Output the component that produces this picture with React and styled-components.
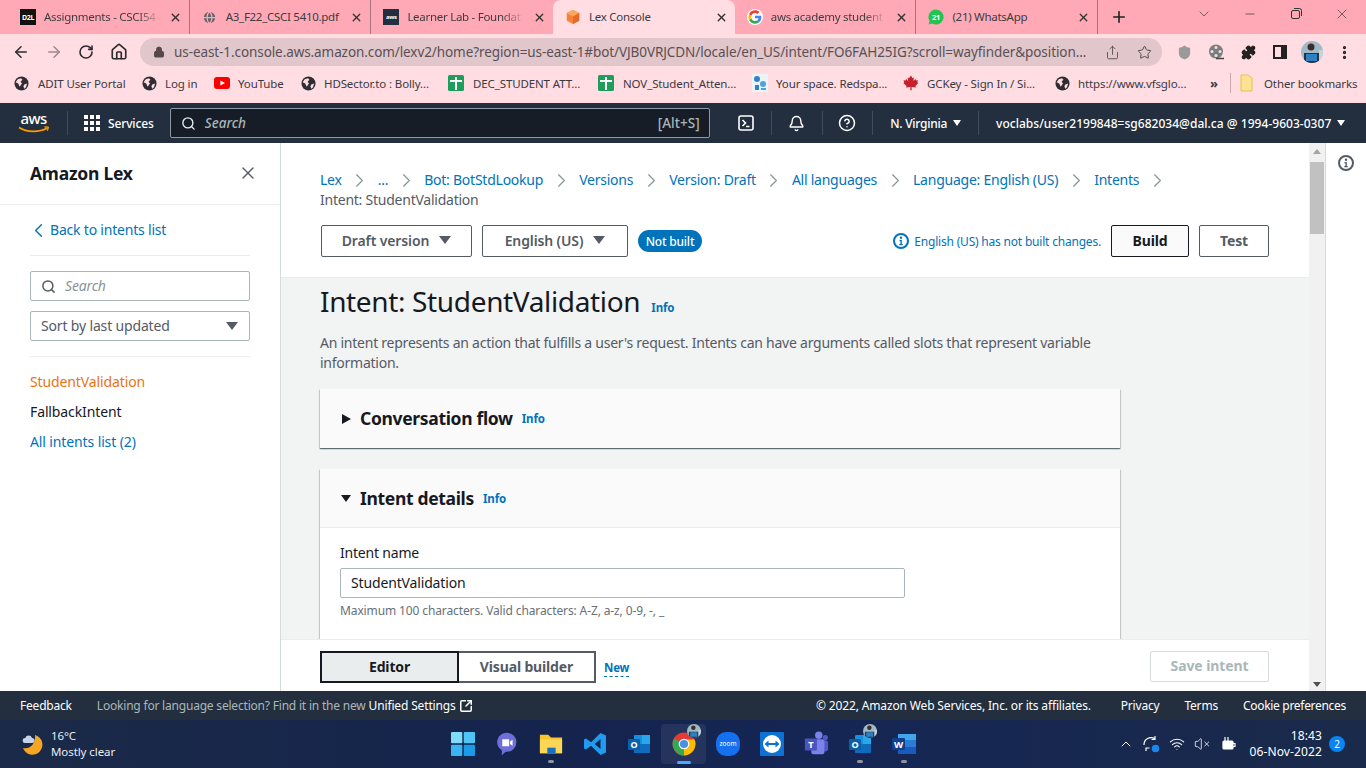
import React from 'react'
import styled, { createGlobalStyle } from 'styled-components'
import {
  ArrowLeft, ArrowRight, RotateCw, Home, Lock, Share, Star, Puzzle, MoreVertical, X, Plus,
  ChevronDown, Minus, Globe, ChevronRight, ChevronLeft, Search, Bell, HelpCircle,
  ChevronUp, Wifi, VolumeX, SquareArrowOutUpRight, Shield,
} from 'lucide-react'

const GlobalStyle = createGlobalStyle`
  html, body { margin: 0; padding: 0; background: #fff; }
  * { box-sizing: border-box; }
  body { font-family: "Noto Sans", "Open Sans", sans-serif; overflow: hidden; }
`

const Shell = styled.div`
  width: 1366px;
  height: 768px;
  display: flex;
  flex-direction: column;
  overflow: hidden;
`

/* browser chrome */
const TabStrip = styled.div`
  height: 34px;
  background: #ffa9b6;
  padding-left: 8px;
  display: flex;
  align-items: stretch;
  flex: none;
`

const Tab = styled.div`
  width: 181.7px;
  flex: none;
  padding: 0 7px 0 12px;
  display: flex;
  align-items: center;
  gap: 8px;
  font-size: 11.5px;
  letter-spacing: -0.28px;
  color: #3c3c40;
  background: ${p => (p.$active ? '#ffdde3' : 'transparent')};
  border-radius: ${p => (p.$active ? '8px 8px 0 0' : '0')};
  border-right: ${p => (p.$sep ? '1px solid #a8727c' : 'none')};
  background-clip: ${p => (p.$sep ? 'padding-box' : 'border-box')};
`

const TabTitle = styled.span`
  flex: 1;
  min-width: 0;
  white-space: nowrap;
  margin-top: -1px;
  ${p => (p.$fade ? 'mask-image: linear-gradient(to right, #000 80%, transparent 100%);' : '')}
`

const TabFavicon = styled.span`
  width: 16px;
  height: 16px;
  flex: none;
  display: flex;
  align-items: center;
  justify-content: center;
`

const D2lMark = styled.span`
  width: 16px;
  height: 16px;
  background: #111;
  color: #fff;
  font-size: 7px;
  font-weight: 700;
  letter-spacing: -0.3px;
  display: flex;
  align-items: center;
  justify-content: center;
`

const AwsTile = styled.span`
  width: 16px;
  height: 16px;
  background: #232f3e;
  color: #fff;
  font-size: 6px;
  font-weight: 700;
  display: flex;
  align-items: center;
  justify-content: center;
`

const NewTab = styled.span`
  width: 42px;
  display: flex;
  align-items: center;
  justify-content: center;
`

const WindowControls = styled.div`
  margin-left: auto;
  display: flex;
  align-items: center;
  padding-right: 1px;
  margin-top: -7px;
`

const WindowButton = styled.span`
  width: 46px;
  display: flex;
  align-items: center;
  justify-content: center;
  color: #333;
`

const Toolbar = styled.div`
  height: 32px;
  background: #ffdde3;
  display: flex;
  align-items: center;
  padding-left: 5px;
  flex: none;
  color: #333;
`

const NavButton = styled.span`
  width: 32.5px;
  margin-top: 4px;
  display: flex;
  align-items: center;
  justify-content: center;
  color: ${p => (p.$dim ? '#9a8a8e' : '#2b2b2e')};
`

const Omnibox = styled.div`
  width: 1022px;
  height: 28px;
  margin-left: 5px;
  margin-top: 4px;
  border-radius: 14px;
  background: #e1c6cb;
  display: flex;
  align-items: center;
  padding: 0 10px 0 13px;
  gap: 9px;
  color: #55494c;
`

const Url = styled.span`
  flex: 1;
  font-size: 13.5px;
  letter-spacing: -0.085px;
  color: #5a5053;
  white-space: nowrap;
  overflow: hidden;
`

const ToolIcons = styled.div`
  display: flex;
  align-items: center;
  margin-left: 6px;
  margin-top: 4px;
`

const ToolIcon = styled.span`
  width: 32px;
  display: flex;
  align-items: center;
  justify-content: center;
`

const SidePanelIcon = styled.span`
  width: 14px;
  height: 14px;
  border: 2px solid #222;
  border-right-width: 6px;
`

const BookmarkBar = styled.div`
  height: 37px;
  padding: 0 0 3px 14px;
  background: #ffdde3;
  display: flex;
  align-items: center;
  font-size: 11.5px;
  letter-spacing: -0.12px;
  color: #3a3a3e;
  flex: none;
`

const Bookmark = styled.span`
  display: flex;
  align-items: center;
  gap: ${p => p.$gap || 8}px;
  flex: none;
  white-space: nowrap;
  width: ${p => p.$w}px;
`

const BookmarkSep = styled.span`
  width: 1px;
  height: 20px;
  background: #c9a9af;
  margin: 0 9px 0 0;
  flex: none;
`

const More = styled.span`
  width: 33px;
  font-size: 13px;
  font-weight: 700;
  flex: none;
  padding-left: 13px;
`

/* aws nav */
const ConsoleNav = styled.div`
  height: 40px;
  background: #232f3e;
  color: #fff;
  display: flex;
  align-items: center;
  font-size: 12px;
  font-weight: 500;
  flex: none;
  padding-left: 18px;
`

const NavDivider = styled.span`
  width: 1px;
  height: 24px;
  background: #414d5c;
  flex: none;
  margin: ${p => p.$m || '0'};
`

const ServicesButton = styled.span`
  display: flex;
  align-items: center;
  gap: 8px;
  letter-spacing: -0.13px;
`

const SearchBox = styled.div`
  width: 540px;
  height: 30px;
  margin-left: 16px;
  background: #161d26;
  border: 1px solid #8d99a5;
  border-radius: 2px;
  display: flex;
  align-items: center;
  padding: 0 9px 0 10px;
  color: #aab7b8;
  font-size: 13.5px;
  letter-spacing: 0.05px;
`

const SearchHint = styled.span`
  font-style: italic;
  margin-left: 9px;
  flex: 1;
`

const NavIcon = styled.span`
  width: 49.5px;
  flex: none;
  display: flex;
  align-items: center;
  justify-content: center;
`

const ShellSlot = styled(NavIcon)`
  margin-left: 12px;
`

const NavMenu = styled.span`
  display: flex;
  align-items: center;
  white-space: nowrap;
  letter-spacing: ${p => p.$ls}px;
  gap: 6px;
  padding: 0 ${p => p.$pr || 0}px 0 17px;
`

const Tri = styled.span`
  width: 0;
  height: 0;
  border-left: ${p => p.$s || 4.5}px solid transparent;
  border-right: ${p => p.$s || 4.5}px solid transparent;
  border-top: ${p => (p.$s || 4.5) * 1.35}px solid ${p => p.$c || 'currentColor'};
  display: inline-block;
  flex: none;
`

/* console body */
const Body = styled.div`
  flex: 1;
  min-height: 0;
  display: flex;
`

const Sidebar = styled.aside`
  width: 281px;
  flex: none;
  border-right: 1px solid #d5dbdb;
  background: #fff;
  font-size: 14px;
`

const SideHeader = styled.div`
  height: 62px;
  padding: 0 22px 2px 30px;
  border-bottom: 1px solid #eaeded;
  display: flex;
  align-items: center;
  justify-content: space-between;
  font-size: 17.5px;
  font-weight: 700;
  letter-spacing: -0.25px;
  color: #16191f;
`

const SideSection = styled.div`
  margin: 0 30px;
  padding: ${p => p.$pad};
  border-bottom: ${p => (p.$line ? '1px solid #eaeded' : 'none')};
  display: flex;
  flex-direction: column;
  gap: ${p => p.$gap || 0}px;
`

const BackLink = styled.a`
  color: #0073bb;
  display: flex;
  align-items: center;
  gap: 0;
  margin-left: -3px;
  letter-spacing: -0.2px;
  height: 20px;
  line-height: 18px;
`

const SideField = styled.div`
  height: 30px;
  border: 1px solid #aab7b8;
  border-radius: 2px;
  display: flex;
  align-items: center;
  padding: 0 11px 0 10px;
  color: #545b64;
  letter-spacing: -0.16px;
`

const SideSearchText = styled.span`
  font-style: italic;
  color: #879596;
  margin: -2px 0 0 9px;
`

const SideSelectText = styled.span`
  color: #545b64;
  flex: 1;
  margin-top: -2px;
`

const SideLink = styled.a`
  display: block;
  height: 30px;
  line-height: 20px;
  letter-spacing: -0.12px;
  color: ${p => p.$color};
`

const Main = styled.main`
  flex: 1;
  min-width: 0;
  display: flex;
  flex-direction: column;
  font-size: 14px;
`

const StickyHead = styled.div`
  height: 135px;
  flex: none;
  border-bottom: 1px solid #eaeded;
  padding: 27px 40px 0 39px;
  background: #fff;
`

const Crumbs = styled.nav`
  display: flex;
  flex-wrap: wrap;
  align-items: center;
  line-height: 20px;
  letter-spacing: -0.24px;
`

const Crumb = styled.a`
  color: ${p => (p.$plain ? '#545b64' : '#0073bb')};
`

const CrumbSep = styled.span`
  width: 36px;
  height: 20px;
  display: flex;
  align-items: center;
  justify-content: center;
  color: #879596;
  flex: none;
`

const HeadRow = styled.div`
  display: flex;
  align-items: center;
  margin-top: 15px;
  padding-left: 1px;
`

const Dropdown = styled.button`
  height: 32px;
  width: ${p => p.$w}px;
  margin-right: 10px;
  border: 1px solid #545b64;
  border-radius: 2px;
  background: #fff;
  color: #545b64;
  font: 600 14px "Noto Sans", sans-serif;
  letter-spacing: -0.12px;
  padding: 0 0 2px;
  display: flex;
  align-items: center;
  justify-content: center;
  gap: 10px;
`

const Badge = styled.span`
  height: 22px;
  width: 64px;
  border-radius: 11px;
  background: #0073bb;
  color: #fff;
  font-size: 12px;
  letter-spacing: -0.2px;
  font-weight: 500;
  display: flex;
  align-items: center;
  justify-content: center;
`

const BuildNote = styled.span`
  margin-left: auto;
  display: flex;
  align-items: center;
  gap: 5px;
  color: #0073bb;
  font-size: 12px;
  letter-spacing: -0.2px;
  margin-right: 10px;
`

const ActionButton = styled.button`
  height: 32px;
  width: ${p => p.$w}px;
  margin-right: ${p => p.$mr || 0}px;
  border: 1px solid ${p => (p.$primary ? '#16191f' : '#545b64')};
  border-radius: 2px;
  background: ${p => (p.$primary ? '#fafafa' : '#fff')};
  color: ${p => (p.$primary ? '#16191f' : '#545b64')};
  font: 700 14px "Noto Sans", sans-serif;
  letter-spacing: -0.1px;
  padding: 0 0 2px;
`

const Content = styled.div`
  flex: 1;
  min-height: 0;
  overflow: hidden;
  background: #f2f3f3;
  padding: 6px 0 0 39px;
`

const TitleRow = styled.div`
  display: flex;
  align-items: baseline;
  gap: 11px;
  height: 34px;
`

const Title = styled.h1`
  margin: 0;
  font-size: 28px;
  font-weight: 400;
  line-height: 34px;
  letter-spacing: -0.35px;
  color: #16191f;
`

const InfoLink = styled.a`
  font-size: 11.5px;
  font-weight: 700;
  color: #0073bb;
  letter-spacing: -0.1px;
`

const Description = styled.p`
  margin: 15px 0 16px;
  width: 800px;
  line-height: 20px;
  color: #545b64;
  letter-spacing: -0.245px;
`

const Card = styled.section`
  width: 800px;
  margin-bottom: 21px;
  background: #fff;
  box-shadow: 0 1px 1px 0 rgba(0, 28, 36, 0.5), 1px 1px 1px 0 rgba(0, 28, 36, 0.12), -1px 1px 1px 0 rgba(0, 28, 36, 0.12);
`

const CardHeader = styled.div`
  height: ${p => p.$h}px;
  padding: 0 21px;
  background: #fafafa;
  border-bottom: ${p => (p.$open ? '1px solid #eaeded' : 'none')};
  display: flex;
  align-items: center;
  gap: 9px;
`

const Caret = styled.span`
  width: 10px;
  height: 12px;
  flex: none;
  display: flex;
  align-items: center;
  justify-content: center;
  color: #16191f;
`

const CardTitle = styled.h2`
  margin: 0 0 1px;
  font-size: 17.5px;
  font-weight: 700;
  letter-spacing: -0.33px;
  color: #16191f;
`

const CardBody = styled.div`
  padding: 15px 20px 30px;
`

const FieldLabel = styled.label`
  display: block;
  line-height: 20px;
  color: #16191f;
  letter-spacing: -0.2px;
  margin-bottom: 5px;
`

const TextInput = styled.div`
  width: 565px;
  height: 30px;
  border: 1px solid #aab7b8;
  border-radius: 2px;
  background: #fff;
  padding: 0 10px;
  line-height: 28px;
  letter-spacing: -0.15px;
  color: #16191f;
`

const Hint = styled.div`
  margin-top: 5px;
  font-size: 12px;
  line-height: 16px;
  color: #687078;
  letter-spacing: -0.12px;
`

const BottomBar = styled.div`
  height: 52px;
  flex: none;
  background: #fff;
  border-top: 1px solid #eaeded;
  display: flex;
  align-items: flex-start;
  padding: 11px 40px 0 39px;
`

const Segment = styled.button`
  height: 32px;
  width: ${p => p.$w}px;
  border: ${p => (p.$on ? '2px solid #16191f' : '2px solid #545b64')};
  border-left-width: ${p => (p.$on ? '2px' : '0')};
  background: ${p => (p.$on ? '#eaeded' : '#fff')};
  color: ${p => (p.$on ? '#16191f' : '#545b64')};
  font: 700 14px "Noto Sans", sans-serif;
  letter-spacing: -0.15px;
  padding: 0 0 2px;
`

const NewTag = styled.span`
  margin: 9px 0 0 8px;
  color: #0073bb;
  font-size: 11.5px;
  font-weight: 700;
  letter-spacing: -0.2px;
  border-bottom: 1px dashed #0073bb;
  line-height: 16px;
`

const SaveButton = styled.button`
  margin-left: auto;
  width: 119px;
  height: 31px;
  border: 1px solid #d5dbdb;
  border-radius: 2px;
  background: #fff;
  color: #aab7b8;
  font: 700 14px "Noto Sans", sans-serif;
  letter-spacing: -0.1px;
  padding: 0 0 2px;
`

const Scrollbar = styled.div`
  width: 16px;
  flex: none;
  background: #f1f1f1;
  display: flex;
  flex-direction: column;
  align-items: stretch;
  padding: 6px 0 4px;
`

const ScrollArrow = styled.span`
  align-self: center;
  width: 0;
  height: 0;
  border-left: 4px solid transparent;
  border-right: 4px solid transparent;
  ${p => (p.$up ? 'border-bottom: 5px solid #a3a3a3;' : 'border-top: 5px solid #505050;')}
`

const ScrollThumb = styled.span`
  height: 72px;
  margin: 8px 1px auto;
  background: #c1c1c1;
`

const Rail = styled.div`
  width: 41px;
  flex: none;
  border-left: 1px solid #d5dbdb;
  background: #fff;
  display: flex;
  justify-content: center;
  padding-top: 12px;
  color: #545b64;
`

/* footers */
const Footer = styled.footer`
  height: 29px;
  flex: none;
  background: #232f3e;
  color: #fff;
  display: flex;
  align-items: center;
  font-size: 12px;
  letter-spacing: -0.2px;
  padding: 0 20px;
  white-space: nowrap;
`

const FootNote = styled.span`
  color: #aab7b8;
  margin-left: 25px;
`

const FootLink = styled.span`
  margin-left: ${p => p.$ml}px;
  letter-spacing: ${p => p.$ls || -0.2}px;
  display: flex;
  align-items: center;
  gap: 3px;
`

const Copyright = styled(FootLink)`
  margin-left: auto;
`

const Taskbar = styled.div`
  height: 48px;
  flex: none;
  background: linear-gradient(90deg, #1b2a47 0%, #14244d 40%, #152655 60%, #1a2a4a 100%);
  color: #fff;
  display: flex;
  align-items: center;
  padding-left: 21px;
`

const Weather = styled.div`
  display: flex;
  align-items: center;
  gap: 8px;
  width: 420px;
  flex: none;
  font-size: 11.5px;
  line-height: 16px;
`

const WeatherText = styled.div`
  letter-spacing: -0.08px;
  color: #e9edf4;
`

const TaskIcons = styled.div`
  display: flex;
  align-items: center;
`

const TaskItem = styled.span`
  width: 44.1px;
  height: 40px;
  flex: none;
  display: flex;
  align-items: center;
  justify-content: center;
  position: relative;
  border-radius: 4px;
  background: ${p => (p.$active ? 'rgba(255,255,255,0.07)' : 'transparent')};
  &::after {
    content: '';
    display: ${p => (p.$dot || p.$active ? 'block' : 'none')};
    position: absolute;
    bottom: ${p => (p.$active ? 0 : 1)}px;
    left: 50%;
    width: ${p => (p.$active ? 14 : 6)}px;
    height: 3px;
    margin-left: ${p => (p.$active ? -7 : -3)}px;
    border-radius: 2px;
    background: ${p => (p.$active ? '#4ca8ff' : '#8d95a5')};
  }
`

const MiniAvatar = styled.span`
  position: absolute;
  top: 0;
  right: 5px;
  display: flex;
`

const Tray = styled.div`
  margin-left: auto;
  display: flex;
  align-items: center;
  padding-right: 21px;
  color: #fff;
`

const TrayIcon = styled.span`
  width: 25.5px;
  flex: none;
  display: flex;
  align-items: center;
  justify-content: center;
`

const Clock = styled.div`
  text-align: right;
  font-size: 12px;
  line-height: 16px;
  letter-spacing: 0.12px;
  margin-left: 9px;
`

const NotifyBadge = styled.span`
  width: 16px;
  height: 16px;
  margin-left: 7px;
  border-radius: 50%;
  background: #0a84f0;
  color: #fff;
  font-size: 10px;
  display: flex;
  align-items: center;
  justify-content: center;
`

/* drawings */
const LexCube = () => (
  <svg width="18" height="18" viewBox="0 0 18 18">
    <path d="M9 1l7 3.6v8.6L9 17l-7-3.8V4.6z" fill="#f58536" />
    <path d="M9 1l7 3.6L9 8.4 2 4.6z" fill="#f9a95c" />
    <path d="M9 8.4V17l7-3.8V4.6z" fill="#e8682a" />
  </svg>
)

const GoogleG = () => (
  <svg width="16" height="16" viewBox="0 0 48 48">
    <circle cx="24" cy="24" r="24" fill="#fff" />
    <path fill="#4285F4" d="M43 24.5c0-1.400-.1-2.700-.4-4H24v7.600h10.700c-.5 2.500-1.900 4.600-4 6l6.400 5c3.700-3.500 5.900-8.600 5.900-14.600z" />
    <path fill="#34A853" d="M24 44c5.400 0 9.900-1.800 13.100-4.900l-6.400-5c-1.800 1.200-4 1.900-6.700 1.900-5.200 0-9.600-3.500-11.100-8.200l-6.600 5.100C9.600 39.400 16.300 44 24 44z" />
    <path fill="#FBBC05" d="M12.900 27.800c-.8-2.400-.8-5.100 0-7.500l-6.600-5.100c-2.800 5.600-2.800 12.100 0 17.700z" />
    <path fill="#EA4335" d="M24 12c2.900 0 5.500 1 7.600 3l5.700-5.700C33.900 6 29.400 4 24 4 16.300 4 9.600 8.600 6.300 15.200l6.600 5.100C14.400 15.500 18.800 12 24 12z" />
  </svg>
)

const WhatsAppMark = () => (
  <svg width="16" height="16" viewBox="0 0 16 16">
    <path d="M8 0.500a7.500 7.500 0 0 0-6.400 11.400L.6 15.500l3.700-1A7.500 7.500 0 1 0 8 .5z" fill="#25c34f" />
    <circle cx="8" cy="8" r="5.500" fill="#25c34f" />
    <text x="8" y="10.800" fontSize="7.500" fontWeight="700" textAnchor="middle" fill="#fff" fontFamily="Noto Sans">21</text>
  </svg>
)

const SheetMark = () => (
  <svg width="16" height="16" viewBox="0 0 16 16">
    <rect width="16" height="16" rx="1.500" fill="#1e9e5a" />
    <path d="M7 2h2v3h5v2H9v8H7V7H2V5h5z" fill="#fff" />
  </svg>
)

const YoutubeMark = () => (
  <svg width="16" height="16" viewBox="0 0 16 16">
    <rect y="2" width="16" height="12" rx="3" fill="#f00" />
    <path d="M6.400 5.400L11 8l-4.600 2.600z" fill="#fff" />
  </svg>
)

const GlobeDark = () => (
  <svg width="15" height="15" viewBox="0 0 16 16">
    <circle cx="8" cy="8" r="7.500" fill="#2e2e32" />
    <path d="M4 3.500l3.500-1L9 4 7 6 8.500 8 6 11.500 4.500 8 1.700 6.700zM11 9l3-1-1.200 4L11 13.500 10 11z" fill="#ffdde3" />
  </svg>
)

const SpaceMark = () => (
  <svg width="16" height="18" viewBox="0 0 16 18">
    <rect width="16" height="18" fill="#eef3f8" />
    <circle cx="5" cy="5" r="3" fill="#2f82c7" />
    <circle cx="11" cy="10" r="3" fill="#4aa3df" />
    <rect x="3" y="11" width="4" height="5" fill="#2f82c7" />
    <rect x="9" y="14" width="5" height="2" fill="#4aa3df" />
  </svg>
)

const MapleLeaf = () => (
  <svg width="16" height="16" viewBox="0 0 16 16">
    <path d="M8 .500l1.500 2.800 1.400-.7-.5 3.500 2-2 .6 1.400 2-.3-.7 2.300.9.500L12.500 11l.4 1.400-4.300-.5.100 3.300h-1.400l.1-3.300-4.300.5.400-1.400L.3 8l.9-.5-.7-2.300 2 .3.600-1.400 2 2-.5-3.500 1.400.7z" fill="#c4202b" />
  </svg>
)

const FolderMark = () => (
  <svg width="13" height="18" viewBox="0 0 13 18">
    <path d="M1 1h7l4 3v13H1z" fill="#fde293" stroke="#e8c04f" />
  </svg>
)

const FilmReel = () => (
  <svg width="17" height="18" viewBox="0 0 17 18">
    <circle cx="8" cy="8.500" r="7" fill="#7d7d7d" />
    <circle cx="8" cy="4.500" r="1.500" fill="#e6e6e6" />
    <circle cx="8" cy="12.500" r="1.500" fill="#e6e6e6" />
    <circle cx="4" cy="8.500" r="1.500" fill="#e6e6e6" />
    <circle cx="12" cy="8.500" r="1.500" fill="#e6e6e6" />
    <path d="M8 15.500h8" stroke="#444" strokeWidth="1.500" />
  </svg>
)

const Portrait = ({ size }) => (
  <svg width={size} height={size} viewBox="0 0 22 22">
    <defs>
      <clipPath id={`portrait-${size}`}><circle cx="11" cy="11" r="11" /></clipPath>
    </defs>
    <g clipPath={`url(#portrait-${size})`}>
      <rect width="22" height="22" fill="#9fb9c6" />
      <circle cx="10" cy="6" r="3.500" fill="#3a2e2a" />
      <path d="M3 12h15v10H3z" fill="#2c3138" />
      <path d="M5 13h11v7H5z" fill="#2f7fc4" />
      <path d="M18 9h4v13h-4z" fill="#c4d4dc" />
    </g>
  </svg>
)

const AwsLogo = () => (
  <svg width="31" height="30" viewBox="0 0 31 30">
    <text x="15.500" y="16" textAnchor="middle" fontSize="15" fill="#fff" fontFamily="Noto Sans" letterSpacing="-0.600">aws</text>
    <path d="M1 19.500c8 5 20 5 28 .8" fill="none" stroke="#f90" strokeWidth="1.600" />
    <path d="M26.500 18.800l3.800.6-1 3.200" fill="none" stroke="#f90" strokeWidth="1.400" />
  </svg>
)

const GridDots = () => (
  <svg width="16" height="16" viewBox="0 0 16 16" fill="#fff">
    {[0, 6, 12].flatMap(y => [0, 6, 12].map(x => <rect key={`${x}-${y}`} x={x} y={y} width="4" height="4" />))}
  </svg>
)

const ShellIcon = () => (
  <svg width="16" height="16" viewBox="0 0 16 16" fill="none" stroke="#fff" strokeWidth="1.600">
    <rect x="1" y="1" width="14" height="14" rx="2" />
    <path d="M4.500 5l3 3-3 3M8 11.500h3.500" />
  </svg>
)

const InfoGlyph = ({ color }) => (
  <svg width="16" height="16" viewBox="0 0 16 16">
    <circle cx="8" cy="8" r="7" fill="none" stroke={color} strokeWidth="2" />
    <circle cx="8" cy="4.800" r="1.200" fill={color} />
    <path d="M6.500 7h2.300v4h1v1.200H6.300V11h1.100V8.200H6.500z" fill={color} />
  </svg>
)

const WeatherMark = () => (
  <svg width="22" height="24" viewBox="0 0 22 24">
    <path d="M14 3a10 10 0 1 1-12 13c7 2 13-5 12-13z" fill="#f5a623" />
    <path d="M4 11a2.500 2.500 0 0 1 .3-5 3.500 3.500 0 0 1 6.700 0 2.500 2.500 0 0 1 0 5z" fill="#c6d3ea" />
  </svg>
)

const WinStart = () => (
  <svg width="24" height="24" viewBox="0 0 24 24">
    <rect width="11.300" height="11.300" rx="1" fill="#7fdcfb" />
    <rect x="12.700" width="11.300" height="11.300" rx="1" fill="#4fc4f5" />
    <rect y="12.700" width="11.300" height="11.300" rx="1" fill="#3ab4f2" />
    <rect x="12.700" y="12.700" width="11.300" height="11.300" rx="1" fill="#1a9be8" />
  </svg>
)

const ChatMark = () => (
  <svg width="22" height="24" viewBox="0 0 24 28">
    <path d="M12 1a11 11 0 0 1 0 22c-.6 0-1 0-1.600-.1L6 27v-5.500A11 11 0 0 1 12 1z" fill="#6e6fd8" />
    <path d="M6.500 8.500h8v8h-8zM15.500 11l3-2v7l-3-2z" fill="#fff" />
  </svg>
)

const Explorer = () => (
  <svg width="24" height="24" viewBox="0 0 26 26">
    <path d="M1 3h9l3 3h12v17H1z" fill="#f7c52b" />
    <path d="M1 8h24v15H1z" fill="#fcd655" />
    <rect x="9" y="17" width="9" height="6" fill="#1a6fc4" />
  </svg>
)

const VsCode = () => (
  <svg width="24" height="24" viewBox="0 0 24 24">
    <path d="M17.500 1L23 3.500v17L17.500 23 8 13.800 3 17.500 1 16.500v-9l2-1 5 3.700zM17.500 7l-5.800 5 5.800 5z" fill="#1f9cf0" />
  </svg>
)

const OutlookMark = () => (
  <svg width="24" height="24" viewBox="0 0 24 24">
    <rect x="7" y="3" width="16" height="18" rx="1" fill="#1490df" />
    <rect x="15" y="3" width="8" height="9" fill="#28a8ea" />
    <path d="M7 12h16v9H7z" fill="#0f6cbd" />
    <rect x="1" y="7" width="12" height="11" rx="1" fill="#0a5fa8" />
    <text x="7" y="15.500" textAnchor="middle" fontSize="9" fontWeight="700" fill="#fff" fontFamily="Noto Sans">O</text>
  </svg>
)

const ChromeMark = () => (
  <svg width="24" height="24" viewBox="0 0 24 24">
    <circle cx="12" cy="12" r="11.500" fill="#e53935" />
    <path d="M12 12L2 6.500A11.500 11.500 0 0 0 12 23.500z" fill="#34a853" />
    <path d="M12 12v11.500A11.500 11.500 0 0 0 22.500 7.500H12z" fill="#fbbc05" />
    <circle cx="12" cy="12" r="5.300" fill="#fff" />
    <circle cx="12" cy="12" r="4.100" fill="#4a90e2" />
  </svg>
)

const ZoomMark = () => (
  <svg width="24" height="24" viewBox="0 0 24 24">
    <rect width="24" height="24" rx="10" fill="#1470ef" />
    <text x="12" y="14" textAnchor="middle" fontSize="6.500" fill="#fff" fontFamily="Noto Sans">zoom</text>
  </svg>
)

const TeamViewer = () => (
  <svg width="24" height="24" viewBox="0 0 24 24">
    <rect width="24" height="24" rx="1" fill="#0e72d4" />
    <circle cx="12" cy="12" r="9" fill="#fff" />
    <path d="M4.500 12l4-3.500V11h7V8.500l4 3.500-4 3.500V13h-7v2.500z" fill="#0e72d4" />
  </svg>
)

const TeamsMark = () => (
  <svg width="26" height="26" viewBox="0 0 26 28">
    <circle cx="16" cy="4.500" r="4" fill="#7b83eb" />
    <circle cx="23" cy="7" r="2.800" fill="#5059c9" />
    <rect x="15" y="10" width="11" height="12" rx="3" fill="#5059c9" />
    <rect x="8" y="9" width="14" height="16" rx="2" fill="#7b83eb" />
    <rect x="1" y="8" width="13" height="13" rx="1" fill="#4b53bc" />
    <text x="7.500" y="18.500" textAnchor="middle" fontSize="10" fontWeight="700" fill="#fff" fontFamily="Noto Sans">T</text>
  </svg>
)

const WordMark = () => (
  <svg width="24" height="24" viewBox="0 0 24 24">
    <rect x="6" y="2" width="18" height="6" fill="#41a5ee" />
    <rect x="6" y="8" width="18" height="7" fill="#2b7cd3" />
    <rect x="6" y="15" width="18" height="7" fill="#185abd" />
    <rect y="6" width="13" height="12" rx="1" fill="#103f91" />
    <text x="6.500" y="15.500" textAnchor="middle" fontSize="9.500" fontWeight="700" fill="#fff" fontFamily="Noto Sans">W</text>
  </svg>
)

const SyncMark = () => (
  <svg width="18" height="20" viewBox="0 0 18 20" fill="none" stroke="#fff" strokeWidth="1.200">
    <path d="M2 11a7 7 0 0 1 11-6M13 2v3.500H9.500M4 17v-3H7.500" />
    <circle cx="13.500" cy="14.500" r="3.800" fill="#1a88ea" stroke="none" />
  </svg>
)

const BatteryPlug = () => (
  <svg width="16" height="16" viewBox="0 0 16 16" fill="none" stroke="#fff" strokeWidth="1.200">
    <rect x="3" y="5" width="10" height="8" rx="1" fill="#fff" />
    <path d="M13 7.500h2v3h-2M5 1v4M8 1v4" />
  </svg>
)

const tabs = [
  { title: 'Assignments - CSCI54', icon: <D2lMark>D2L</D2lMark>, sep: true, fade: true },
  { title: 'A3_F22_CSCI 5410.pdf', icon: <Globe size={15} color="#ffa9b6" fill="#5f6368" />, sep: true },
  { title: 'Learner Lab - Foundat', icon: <AwsTile>aws</AwsTile>, fade: true },
  { title: 'Lex Console', icon: <LexCube />, active: true },
  { title: 'aws academy student', icon: <GoogleG />, sep: true, fade: true },
  { title: '(21) WhatsApp', icon: <WhatsAppMark />, sep: true },
]

const bookmarks = [
  { label: 'ADIT User Portal', icon: <GlobeDark />, w: 128, gap: 9 },
  { label: 'Log in', icon: <GlobeDark />, w: 72 },
  { label: 'YouTube', icon: <YoutubeMark />, w: 87 },
  { label: 'HDSector.to : Bolly...', icon: <GlobeDark />, w: 147 },
  { label: 'DEC_STUDENT ATT...', icon: <SheetMark />, w: 150, gap: 9 },
  { label: 'NOV_Student_Atten...', icon: <SheetMark />, w: 154, gap: 9 },
  { label: 'Your space. Redspa...', icon: <SpaceMark />, w: 151, gap: 8 },
  { label: 'GCKey - Sign In / Si...', icon: <MapleLeaf />, w: 152 },
  { label: 'https://www.vfsglo...', icon: <GlobeDark />, w: 142 },
]

const crumbs = ['Lex', '...', 'Bot: BotStdLookup', 'Versions', 'Version: Draft', 'All languages', 'Language: English (US)', 'Intents']

const taskIcons = [
  { el: <WinStart /> },
  { el: <ChatMark /> },
  { el: <Explorer />, dot: true },
  { el: <VsCode /> },
  { el: <OutlookMark /> },
  { el: <ChromeMark />, active: true, avatar: true },
  { el: <ZoomMark /> },
  { el: <TeamViewer /> },
  { el: <TeamsMark /> },
  { el: <OutlookMark />, dot: true, avatar: true },
  { el: <WordMark />, dot: true },
]

export default function App() {
  return (
    <Shell>
      <GlobalStyle />
      <TabStrip>
        {tabs.map(t => (
          <Tab key={t.title} $active={t.active} $sep={t.sep}>
            <TabFavicon>{t.icon}</TabFavicon>
            <TabTitle $fade={t.fade}>{t.title}</TabTitle>
            <X size={13} strokeWidth={2.5} color="#333" />
          </Tab>
        ))}
        <NewTab><Plus size={18} strokeWidth={2.2} color="#222" /></NewTab>
        <WindowControls>
          <WindowButton><ChevronDown size={16} strokeWidth={1} /></WindowButton>
          <WindowButton><Minus size={14} strokeWidth={1.2} /></WindowButton>
          <WindowButton><svg width="11" height="11" viewBox="0 0 11 11" fill="none" stroke="#333"><rect x=".5" y="2.500" width="8" height="8" rx="1.500" /><path d="M3 .5h5.500a2 2 0 0 1 2 2V8" /></svg></WindowButton>
          <WindowButton><X size={16} strokeWidth={1} /></WindowButton>
        </WindowControls>
      </TabStrip>

      <Toolbar>
        <NavButton><ArrowLeft size={18} strokeWidth={2} /></NavButton>
        <NavButton $dim><ArrowRight size={18} strokeWidth={2} /></NavButton>
        <NavButton><RotateCw size={16} strokeWidth={2.4} /></NavButton>
        <NavButton><Home size={18} strokeWidth={2.2} /></NavButton>
        <Omnibox>
          <Lock size={12} fill="#55494c" strokeWidth={2} />
          <Url>us-east-1.console.aws.amazon.com/lexv2/home?region=us-east-1#bot/VJB0VRJCDN/locale/en_US/intent/FO6FAH25IG?scroll=wayfinder&amp;position...</Url>
          <Share size={15} strokeWidth={1.4} />
          <Star size={15} strokeWidth={1.6} style={{ marginLeft: 8 }} />
        </Omnibox>
        <ToolIcons>
          <ToolIcon><Shield size={15} fill="#9a9a9a" color="#9a9a9a" /></ToolIcon>
          <ToolIcon><FilmReel /></ToolIcon>
          <ToolIcon><Puzzle size={15} fill="#222" color="#222" /></ToolIcon>
          <ToolIcon><SidePanelIcon /></ToolIcon>
          <ToolIcon><Portrait size={22} /></ToolIcon>
          <ToolIcon><MoreVertical size={17} strokeWidth={2.6} color="#222" /></ToolIcon>
        </ToolIcons>
      </Toolbar>

      <BookmarkBar>
        {bookmarks.map(b => (
          <Bookmark key={b.label} $w={b.w} $gap={b.gap}>{b.icon}{b.label}</Bookmark>
        ))}
        <More>»</More>
        <BookmarkSep />
        <Bookmark $w={118} $gap={11}><FolderMark />Other bookmarks</Bookmark>
      </BookmarkBar>

      <ConsoleNav>
        <AwsLogo />
        <NavDivider $m="0 16px 0 18px" />
        <ServicesButton><GridDots />Services</ServicesButton>
        <SearchBox>
          <Search size={15} color="#e6ecec" strokeWidth={2.2} />
          <SearchHint>Search</SearchHint>
          [Alt+S]
        </SearchBox>
        <ShellSlot><ShellIcon /></ShellSlot>
        <NavDivider />
        <NavIcon><Bell size={17} /></NavIcon>
        <NavDivider />
        <NavIcon><HelpCircle size={18} /></NavIcon>
        <NavDivider />
        <NavMenu $pr={17} $ls={-0.25}>N. Virginia <Tri /></NavMenu>
        <NavDivider />
        <NavMenu $ls={0.03}>voclabs/user2199848=sg682034@dal.ca @ 1994-9603-0307 <Tri /></NavMenu>
      </ConsoleNav>

      <Body>
        <Sidebar>
          <SideHeader>Amazon Lex<X size={20} strokeWidth={1.6} color="#545b64" /></SideHeader>
          <SideSection $line $pad="15px 0 15px">
            <BackLink><ChevronLeft size={23} strokeWidth={1.5} />Back to intents list</BackLink>
          </SideSection>
          <SideSection $line $pad="15px 0 15px" $gap={10}>
            <SideField><Search size={15} strokeWidth={2.4} /><SideSearchText>Search</SideSearchText></SideField>
            <SideField><SideSelectText>Sort by last updated</SideSelectText><Tri $s={6} $c="#545b64" /></SideField>
          </SideSection>
          <SideSection $pad="15px 0 0">
            <SideLink $color="#ec7211">StudentValidation</SideLink>
            <SideLink $color="#16191f">FallbackIntent</SideLink>
            <SideLink $color="#0073bb">All intents list (2)</SideLink>
          </SideSection>
        </Sidebar>

        <Main>
          <StickyHead>
            <Crumbs>
              {crumbs.map(c => (
                <React.Fragment key={c}>
                  <Crumb>{c}</Crumb>
                  <CrumbSep><ChevronRight size={23} strokeWidth={1.2} /></CrumbSep>
                </React.Fragment>
              ))}
              <Crumb $plain>Intent: StudentValidation</Crumb>
            </Crumbs>
            <HeadRow>
              <Dropdown $w={151}>Draft version <Tri $s={6} /></Dropdown>
              <Dropdown $w={146}>English (US) <Tri $s={6} /></Dropdown>
              <Badge>Not built</Badge>
              <BuildNote><InfoGlyph color="#0073bb" />English (US) has not built changes.</BuildNote>
              <ActionButton $primary $w={78} $mr={10}>Build</ActionButton>
              <ActionButton $w={70}>Test</ActionButton>
            </HeadRow>
          </StickyHead>

          <Content>
            <TitleRow>
              <Title>Intent: StudentValidation</Title>
              <InfoLink>Info</InfoLink>
            </TitleRow>
            <Description>
              An intent represents an action that fulfills a user's request. Intents can have arguments called slots that represent variable information.
            </Description>
            <Card>
              <CardHeader $h={59}>
                <Caret><svg width="9" height="10" viewBox="0 0 9 10"><path d="M0 0l9 5-9 5z" fill="#16191f" /></svg></Caret>
                <CardTitle>Conversation flow</CardTitle>
                <InfoLink>Info</InfoLink>
              </CardHeader>
            </Card>
            <Card>
              <CardHeader $h={59} $open>
                <Caret><Tri $s={5.500} /></Caret>
                <CardTitle>Intent details</CardTitle>
                <InfoLink>Info</InfoLink>
              </CardHeader>
              <CardBody>
                <FieldLabel>Intent name</FieldLabel>
                <TextInput>StudentValidation</TextInput>
                <Hint>Maximum 100 characters. Valid characters: A-Z, a-z, 0-9, -, _</Hint>
              </CardBody>
            </Card>
          </Content>

          <BottomBar>
            <Segment $on $w={139}>Editor</Segment>
            <Segment $w={137}>Visual builder</Segment>
            <NewTag>New</NewTag>
            <SaveButton>Save intent</SaveButton>
          </BottomBar>
        </Main>

        <Scrollbar>
          <ScrollArrow $up />
          <ScrollThumb />
          <ScrollArrow />
        </Scrollbar>
        <Rail><InfoGlyph color="#545b64" /></Rail>
      </Body>

      <Footer>
        Feedback
        <FootNote>Looking for language selection? Find it in the new</FootNote>
        <FootLink $ml={3} $ls={-0.15}>Unified Settings<SquareArrowOutUpRight size={14} strokeWidth={2.6} /></FootLink>
        <Copyright $ls={-0.15}>© 2022, Amazon Web Services, Inc. or its affiliates.</Copyright>
        <FootLink $ml={30}>Privacy</FootLink>
        <FootLink $ml={25}>Terms</FootLink>
        <FootLink $ml={25} $ls={-0.3}>Cookie preferences</FootLink>
      </Footer>

      <Taskbar>
        <Weather>
          <WeatherMark />
          <WeatherText>16°C<br />Mostly clear</WeatherText>
        </Weather>
        <TaskIcons>
          {taskIcons.map((t, i) => (
            <TaskItem key={i} $active={t.active} $dot={t.dot}>
              {t.el}
              {t.avatar && <MiniAvatar><Portrait size={14} /></MiniAvatar>}
            </TaskItem>
          ))}
        </TaskIcons>
        <Tray>
          <TrayIcon><ChevronUp size={16} strokeWidth={1.5} /></TrayIcon>
          <TrayIcon><SyncMark /></TrayIcon>
          <TrayIcon><Wifi size={16} strokeWidth={1.6} /></TrayIcon>
          <TrayIcon><VolumeX size={16} strokeWidth={1.2} /></TrayIcon>
          <TrayIcon><BatteryPlug /></TrayIcon>
          <Clock>18:43<br />06-Nov-2022</Clock>
          <NotifyBadge>2</NotifyBadge>
        </Tray>
      </Taskbar>
    </Shell>
  )
}
